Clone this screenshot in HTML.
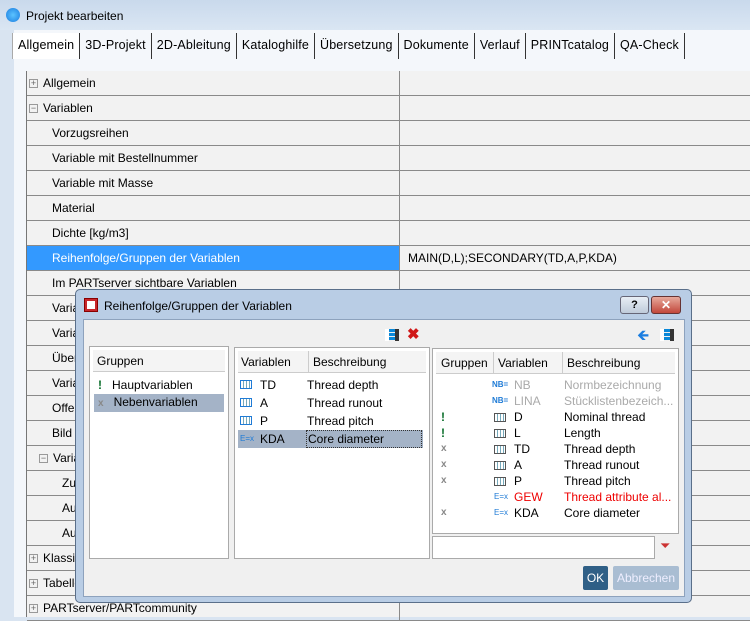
<!DOCTYPE html>
<html><head><meta charset="utf-8"><style>
*{box-sizing:border-box;margin:0;padding:0}
body{width:750px;height:617px;overflow:hidden;font-family:"Liberation Sans",sans-serif;font-size:12px;color:#000;background:#d9e4f1;position:relative}
.abs{position:absolute}
.title{left:0;top:0;width:750px;height:30px;background:linear-gradient(#c9d9ec,#dae6f3)}
.tabs{left:12px;top:33px;height:26px;display:flex}
.tab{padding:5px 5px 0 5px;height:26px;border-right:1px solid #333;font-size:12.5px;letter-spacing:0.15px}
.content{left:14px;top:30px;width:736px;height:587px;background:#f4f7fb}
.grid{left:26px;top:71px;width:724px;height:546px;background:#f2f2f2;border-left:1px solid #777}
.row{position:absolute;left:0;width:724px;height:25px;border-bottom:1px solid #8a8a8a}
.row .l{position:absolute;left:0;width:373px;height:24px;border-right:1px solid #8a8a8a;line-height:24px;white-space:nowrap;overflow:hidden}
.pm{display:inline-block;width:9px;height:9px;border:1px solid #999;font-size:9px;line-height:7px;text-align:center;color:#666;vertical-align:middle;margin:0 5px 0 2px}
.sel .l{background:#3399ff;color:#fff}
.dlg{left:75px;top:289px;width:617px;height:314px;background:#b9cde5;border:1px solid #5a6f8a;border-radius:5px}
.body{left:7px;top:29px;width:602px;height:278px;background:#f0f0f0;border:1px solid #8da2bd}
.panel{background:#fff;border:1px solid #aaa}
.hdr{background:#f4f4f4;border-bottom:1px solid #ccc;height:22px;line-height:22px}
.ic{display:inline-block;width:12px;height:9px;border:1px solid #1f7bd6;background:repeating-linear-gradient(90deg,#fff 0 2px,#7ab 2px 3px);vertical-align:middle}
.ex{color:#1f7bd6;font-size:8px}
.gx{color:#888;font-weight:bold;font-size:10px}
.ex1{color:#0a6e2a;font-weight:bold}
</style></head><body>
<div class="abs title"><div class="abs" style="left:6px;top:8px;width:14px;height:14px;border-radius:50%;background:radial-gradient(#5cc3ff,#1a7de0)"></div><div class="abs" style="left:26px;top:9px;font-size:12px">Projekt bearbeiten</div></div>
<div class="abs content"></div>
<div class="abs tabs"><div class="tab" style="background:#fff;border-left:1px solid #aaa">Allgemein</div><div class="tab">3D-Projekt</div><div class="tab">2D-Ableitung</div><div class="tab">Kataloghilfe</div><div class="tab">Übersetzung</div><div class="tab">Dokumente</div><div class="tab">Verlauf</div><div class="tab">PRINTcatalog</div><div class="tab">QA-Check</div></div>
<div class="abs grid">
<div class="row" style="top:0"><div class="l"><span class="pm">+</span>Allgemein</div></div>
<div class="row" style="top:25px"><div class="l"><span class="pm">−</span>Variablen</div></div>
<div class="row" style="top:50px"><div class="l" style="padding-left:25px">Vorzugsreihen</div></div>
<div class="row" style="top:75px"><div class="l" style="padding-left:25px">Variable mit Bestellnummer</div></div>
<div class="row" style="top:100px"><div class="l" style="padding-left:25px">Variable mit Masse</div></div>
<div class="row" style="top:125px"><div class="l" style="padding-left:25px">Material</div></div>
<div class="row" style="top:150px"><div class="l" style="padding-left:25px">Dichte [kg/m3]</div></div>
<div class="row sel" style="top:175px"><div class="l" style="padding-left:25px">Reihenfolge/Gruppen der Variablen</div><div class="abs" style="left:381px;top:5px">MAIN(D,L);SECONDARY(TD,A,P,KDA)</div></div>
<div class="row" style="top:200px"><div class="l" style="padding-left:25px">Im PARTserver sichtbare Variablen</div></div>
<div class="row" style="top:225px"><div class="l" style="padding-left:25px">Varia</div></div>
<div class="row" style="top:250px"><div class="l" style="padding-left:25px">Varia</div></div>
<div class="row" style="top:275px"><div class="l" style="padding-left:25px">Über</div></div>
<div class="row" style="top:300px"><div class="l" style="padding-left:25px">Varia</div></div>
<div class="row" style="top:325px"><div class="l" style="padding-left:25px">Offe</div></div>
<div class="row" style="top:350px"><div class="l" style="padding-left:25px">Bild</div></div>
<div class="row" style="top:375px"><div class="l" style="padding-left:10px"><span class="pm">−</span>Varia</div></div>
<div class="row" style="top:400px"><div class="l" style="padding-left:35px">Zu</div></div>
<div class="row" style="top:425px"><div class="l" style="padding-left:35px">Au</div></div>
<div class="row" style="top:450px"><div class="l" style="padding-left:35px">Au</div></div>
<div class="row" style="top:475px"><div class="l"><span class="pm">+</span>Klassif</div></div>
<div class="row" style="top:500px"><div class="l"><span class="pm">+</span>Tabelle</div></div>
<div class="row" style="top:525px"><div class="l"><span class="pm">+</span>PARTserver/PARTcommunity</div></div>
</div>
<div class="abs dlg">
<div class="abs" style="left:8px;top:8px;width:14px;height:14px;background:#c8262b;border:1px solid #800"><div style="margin:2px;width:8px;height:8px;background:#fff"></div></div>
<div class="abs" style="left:28px;top:9px;font-size:12px">Reihenfolge/Gruppen der Variablen</div>
<div class="abs" style="left:544px;top:6px;width:29px;height:18px;border:1px solid #667;border-radius:3px;background:linear-gradient(#e8eef5,#bfcbda);text-align:center;font-weight:bold;font-size:11px;line-height:16px">?</div>
<div class="abs" style="left:575px;top:6px;width:30px;height:18px;border:1px solid #633;border-radius:3px;background:linear-gradient(#e7a99c,#c2473a);text-align:center;color:#fff;font-weight:bold;line-height:16px">✕</div>
<div class="abs body">
<div class="abs" style="left:301px;top:9px;width:14px;height:12px;background:repeating-linear-gradient(#0a88d8 0 3px,transparent 3px 4px);border-left:4px solid #fff;box-shadow:-4px 0 0 #333 inset"></div>
<div class="abs" style="left:323px;top:5px;color:#d01818;font-weight:bold;font-size:15px">✖</div>
<div class="abs" style="left:553px;top:5px;color:#1a7de0;font-size:15px">🡸</div>
<div class="abs" style="left:576px;top:9px;width:14px;height:12px;background:repeating-linear-gradient(#0a88d8 0 3px,transparent 3px 4px);border-left:4px solid #fff;box-shadow:-4px 0 0 #333 inset"></div>
<div class="abs panel" style="left:5px;top:26px;width:140px;height:213px">
<div class="hdr" style="margin:3px;padding-left:4px">Gruppen</div>
<div style="padding:1px 0 0 8px;line-height:18px"><span class="ex1">!</span>&nbsp;&nbsp; Hauptvariablen</div>
<div style="margin:0 4px;padding-left:4px;line-height:17px;background:#a4b3c7"><span class="gx">x</span>&nbsp;&nbsp; Nebenvariablen</div>
</div>
<div class="abs panel" style="left:150px;top:27px;width:196px;height:212px">
<div class="hdr" style="margin:3px;padding-left:3px;position:relative">Variablen<span class="abs" style="left:70px;top:0;border-left:1px solid #ccc;padding-left:4px">Beschreibung</span></div>
<div style="position:relative;height:18px;line-height:18px"><span class="ic abs" style="left:5px;top:4px"></span><span class="abs" style="left:25px">TD</span><span class="abs" style="left:72px">Thread depth</span></div>
<div style="position:relative;height:18px;line-height:18px"><span class="ic abs" style="left:5px;top:4px"></span><span class="abs" style="left:25px">A</span><span class="abs" style="left:72px">Thread runout</span></div>
<div style="position:relative;height:18px;line-height:18px"><span class="ic abs" style="left:5px;top:4px"></span><span class="abs" style="left:25px">P</span><span class="abs" style="left:72px">Thread pitch</span></div>
<div style="position:relative;height:18px;line-height:18px;margin:0 6px 0 3px;background:#a4b3c7"><span class="ex abs" style="left:2px">E=x</span><span class="abs" style="left:22px">KDA</span><span class="abs" style="left:68px;border:1px dotted #333;height:18px;width:116px;padding-left:1px;line-height:16px">Core diameter</span></div>
</div>
<div class="abs panel" style="left:348px;top:28px;width:247px;height:186px;font-size:12px">
<div class="hdr" style="margin:3px;position:relative"><span class="abs" style="left:5px">Gruppen</span><span class="abs" style="left:57px;border-left:1px solid #ccc;padding-left:4px">Variablen</span><span class="abs" style="left:126px;border-left:1px solid #ccc;padding-left:4px">Beschreibung</span></div>
<div style="position:relative;line-height:16px">
<div style="position:relative;height:16px;color:#aaa"><span class="ex abs" style="left:59px;font-weight:bold">NB=</span><span class="abs" style="left:81px">NB</span><span class="abs" style="left:131px">Normbezeichnung</span></div>
<div style="position:relative;height:16px;color:#aaa"><span class="ex abs" style="left:59px;font-weight:bold">NB=</span><span class="abs" style="left:81px">LINA</span><span class="abs" style="left:131px">Stücklistenbezeich...</span></div>
<div style="position:relative;height:16px"><span class="ex1 abs" style="left:8px">!</span><span class="ic abs" style="left:61px;top:4px;border-color:#555"></span><span class="abs" style="left:81px">D</span><span class="abs" style="left:131px">Nominal thread</span></div>
<div style="position:relative;height:16px"><span class="ex1 abs" style="left:8px">!</span><span class="ic abs" style="left:61px;top:4px;border-color:#555"></span><span class="abs" style="left:81px">L</span><span class="abs" style="left:131px">Length</span></div>
<div style="position:relative;height:16px"><span class="gx abs" style="left:8px">x</span><span class="ic abs" style="left:61px;top:4px;border-color:#555"></span><span class="abs" style="left:81px">TD</span><span class="abs" style="left:131px">Thread depth</span></div>
<div style="position:relative;height:16px"><span class="gx abs" style="left:8px">x</span><span class="ic abs" style="left:61px;top:4px;border-color:#555"></span><span class="abs" style="left:81px">A</span><span class="abs" style="left:131px">Thread runout</span></div>
<div style="position:relative;height:16px"><span class="gx abs" style="left:8px">x</span><span class="ic abs" style="left:61px;top:4px;border-color:#555"></span><span class="abs" style="left:81px">P</span><span class="abs" style="left:131px">Thread pitch</span></div>
<div style="position:relative;height:16px;color:#e00"><span class="ex abs" style="left:61px">E=x</span><span class="abs" style="left:81px">GEW</span><span class="abs" style="left:131px">Thread attribute al...</span></div>
<div style="position:relative;height:16px"><span class="gx abs" style="left:8px">x</span><span class="ex abs" style="left:61px">E=x</span><span class="abs" style="left:81px">KDA</span><span class="abs" style="left:131px">Core diameter</span></div>
</div></div>
<div class="abs" style="left:348px;top:216px;width:223px;height:23px;background:#fff;border:1px solid #aaa"></div>
<div class="abs" style="left:576px;top:218px;color:#c33;font-size:13px">⏷</div>
<div class="abs" style="left:499px;top:246px;width:25px;height:24px;background:#2f5f86;color:#fff;border-radius:2px;text-align:center;line-height:24px;font-size:12px">OK</div>
<div class="abs" style="left:529px;top:246px;width:66px;height:24px;background:#a9bdd2;color:#eef;border-radius:2px;text-align:center;line-height:24px;font-size:12px">Abbrechen</div>
</div></div>
</body></html>
